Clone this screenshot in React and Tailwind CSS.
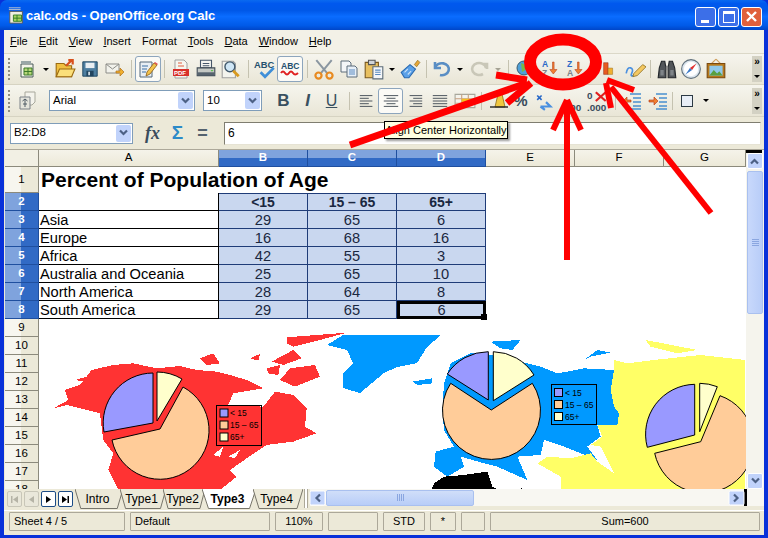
import React from 'react';

const ui = { fontFamily: '"Liberation Sans", Arial, sans-serif' };
const sheetFont = { fontFamily: '"Liberation Sans", Arial, sans-serif' };

const menus = [
  ['F', 'ile'], ['E', 'dit'], ['V', 'iew'], ['I', 'nsert'], ['', 'Format'],
  ['T', 'ools'], ['D', 'ata'], ['W', 'indow'], ['H', 'elp'],
];

const rows = [
  ['Asia', 29, 65, 6],
  ['Europe', 16, 68, 16],
  ['Africa', 42, 55, 3],
  ['Australia and Oceania', 25, 65, 10],
  ['North America', 28, 64, 8],
  ['South America', 29, 65, 6],
];

const Ic = ({ children, size = 20 }) => (
  <svg width={size} height={size} viewBox="0 0 20 20">{children}</svg>
);

const Btn = ({ w = 'w-[25px]', active, children }) => (
  <div className={`${w} h-[26px] shrink-0 flex items-center justify-center ${active ? 'bg-[#fbfaf6] border border-[#8da5bd] rounded-[3px]' : ''}`}>
    {children}
  </div>
);

const Sep = ({ w = 'w-[8px]' }) => (
  <div className={`${w} shrink-0 flex justify-center`}>
    <div className="w-px h-[18px] bg-[#c5c2b0]" />
  </div>
);

const Drop = ({ w = 'w-[12px]', gray }) => (
  <div className={`${w} shrink-0 flex justify-center`}>
    <div className={`w-0 h-0 border-x-[3px] border-x-transparent border-t-[3px] ${gray ? 'border-t-[#a5a294]' : 'border-t-black'}`} />
  </div>
);

const Grip = () => (
  <div className="w-[11px] shrink-0 pl-[4px] flex flex-col gap-[2px]">
    {[0, 1, 2, 3, 4, 5].map((i) => <div key={i} className="w-[2px] h-[2px] bg-[#8f8d80]" />)}
  </div>
);

const Chevron = ({ cls = 'stroke-[#4d6185]' }) => (
  <svg width="11" height="8" viewBox="0 0 11 8" className={cls}><path d="M2 1.5 L5.5 5 L9 1.5" fill="none" strokeWidth="2.2" /></svg>
);

const Combo = ({ w, value }) => (
  <div className={`${w} h-[21px] shrink-0 bg-white border border-[#7f9db9] flex items-center justify-between pl-[3px] pr-[1px]`}>
    <span className="text-[11.5px] text-black">{value}</span>
    <div className="w-[15px] h-[17px] bg-[#c1d3fb] rounded-[2px] flex items-center justify-center"><Chevron /></div>
  </div>
);

const Overflow = () => (
  <div className="ml-auto mr-[2px] w-[10px] h-[26px] shrink-0 bg-[#d3d1c3] flex flex-col items-center justify-between py-[1px]">
    <span className="text-[10px] leading-[9px] font-bold text-black">»</span>
    <div className="w-0 h-0 border-x-[3px] border-x-transparent border-t-[3px] border-t-black mb-[3px]" />
  </div>
);

const Sheetdoc = () => (
  <Ic>
    <path d="M3 5h12v13H3z" fill="#f4f4ea" stroke="#4a5a5a" />
    <path d="M6 9h8v7H6z" fill="#b8d878" stroke="#3c7a2a" />
    <path d="M10 9v7M6 12.5h8" stroke="#3c7a2a" />
    <path d="M3 2h10v3H3z" fill="#9aa7a7" />
  </Ic>
);
const OpenIc = () => (
  <Ic size={22}>
    <path d="M2 5h7l2 2h5v10H2z" fill="#f0c040" stroke="#9a6a10" />
    <path d="M2 17l3-7h14l-3 7z" fill="#fbdf7a" stroke="#9a6a10" />
    <path d="M11 7l5-5M13 2h4v4" stroke="#d8501c" strokeWidth="2" fill="none" />
  </Ic>
);
const SaveIc = () => (
  <Ic size={18}>
    <path d="M2 2h16v16H2z" fill="#4d7ea0" stroke="#16405c" />
    <path d="M5 3h10v6H5z" fill="#e8eef2" />
    <path d="M6 12h8v6H6z" fill="#21455f" />
    <path d="M8 13h2v4H8z" fill="#cfdbe4" />
  </Ic>
);
const MailIc = () => (
  <Ic>
    <path d="M1 5h13v9H1z" fill="#f2f2ec" stroke="#8d8d88" />
    <path d="M1 5l6.5 5L14 5" fill="none" stroke="#8d8d88" />
    <path d="M11 12h4v-3l4 4-4 4v-3h-4z" fill="#f0b030" stroke="#b0701a" strokeWidth=".7" />
  </Ic>
);
const EditIc = () => (
  <Ic>
    <path d="M2 3h12v15H2z" fill="#e8eef4" stroke="#55687a" />
    <path d="M4 7h6M4 10h5M4 13h4" stroke="#3a6ea5" />
    <path d="M9 13l7-9 3 2-7 9-4 2z" fill="#f3c24a" stroke="#8a5a14" strokeWidth=".8" />
    <path d="M16 4l3 2 1-1-3-2z" fill="#e25050" />
  </Ic>
);
const PdfIc = () => (
  <Ic>
    <path d="M4 1h9l3 3v15H4z" fill="#f6f6f0" stroke="#a0a0a0" />
    <path d="M7 4h4M7 7h6" stroke="#e06040" />
    <path d="M2 10h16v7H2z" fill="#d8302a" />
    <text x="3" y="16" fontSize="6" fontWeight="700" fill="#fff" fontFamily="Liberation Sans">PDF</text>
  </Ic>
);
const PrintIc = () => (
  <Ic size={22}>
    <path d="M5 2h10v7H5z" fill="#f6f6f2" stroke="#46566a" />
    <path d="M7 5h6M7 7h6" stroke="#46566a" />
    <path d="M2 9h16v7H2z" fill="#c4c8c4" stroke="#3f4a55" />
    <path d="M2 13h16v3H2z" fill="#57636e" />
    <path d="M14.5 11h2v1h-2z" fill="#58c048" />
  </Ic>
);
const PreviewIc = () => (
  <Ic size={22}>
    <path d="M2 3h10l2 2v13H2z" fill="#f4f4ee" stroke="#a0a0a0" />
    <circle cx="9" cy="8" r="4.5" fill="#cfe6f6" stroke="#40586c" strokeWidth="1.3" />
    <path d="M12 11.5l5 5" stroke="#d89a20" strokeWidth="2.6" />
  </Ic>
);
const SpellIc = () => (
  <Ic size={22}>
    <text x="0" y="9" fontSize="8.5" fontWeight="700" fill="#24506e" fontFamily="Liberation Sans">ABC</text>
    <path d="M6 13l4 4 8-8" fill="none" stroke="#3f8fd8" strokeWidth="2.5" />
  </Ic>
);
const AutoSpellIc = () => (
  <Ic size={20}>
    <text x="1" y="10" fontSize="8.5" fontWeight="700" fill="#24506e" fontFamily="Liberation Sans">ABC</text>
    <path d="M1 14q2-3 4 0t4 0 4 0 5 0" fill="none" stroke="#e02020" strokeWidth="2" />
  </Ic>
);
const CutIc = () => (
  <Ic size={22}>
    <path d="M3 2l10 12M17 2L7 14" stroke="#8a96a0" strokeWidth="1.8" />
    <circle cx="5" cy="16" r="2.8" fill="none" stroke="#e88a20" strokeWidth="2" />
    <circle cx="15" cy="16" r="2.8" fill="none" stroke="#e88a20" strokeWidth="2" />
  </Ic>
);
const CopyIc = () => (
  <Ic>
    <path d="M2 2h8l2 2v9H2z" fill="#f4f6f8" stroke="#5c6c7a" />
    <path d="M8 7h8l2 2v9H8z" fill="#e8f0f8" stroke="#5c6c7a" />
    <path d="M10 11h6M10 13h6M10 15h6" stroke="#5a8ac0" />
  </Ic>
);
const PasteIc = () => (
  <Ic size={22}>
    <path d="M2 4h12v14H2z" fill="#e8c060" stroke="#7a5a20" />
    <path d="M5 2h6v4H5z" fill="#d0d4d8" stroke="#555" />
    <path d="M9 8h9v11H9z" fill="#f4f6f8" stroke="#5c6c7a" />
    <path d="M11 11h5M11 13h5M11 15h5" stroke="#5a8ac0" />
  </Ic>
);
const BrushIc = () => (
  <Ic size={22}>
    <path d="M14 6l3-4 2 2-3 4z" fill="#e8a838" stroke="#8a6a1a" strokeWidth=".6" />
    <path d="M2 13l8-7 5 4-6 8H5z" fill="#5aa0e8" stroke="#2a6ab0" />
    <path d="M5 13l3-3M8 15l3-3" stroke="#c8e0f8" />
  </Ic>
);
const UndoIc = ({ gray }) => (
  <Ic size={20}>
    <path d={gray ? 'M7 5 h-5 v5 M3 9 a7 6 0 1 1 3 6' : 'M3 3v6h6 M3 9 a7 6 0 1 1 5 7'} fill="none" stroke={gray ? '#c9c7b8' : '#5a8ec4'} strokeWidth="2.6" transform={gray ? 'matrix(-1 0 0 1 20 0)' : undefined} />
  </Ic>
);
const NavIc = () => (
  <Ic size={20}>
    <circle cx="9" cy="9" r="7" fill="#4ea0d8" stroke="#3a5a70" />
    <path d="M6 4l5 2 1 4-5 3z" fill="#78b848" />
  </Ic>
);
const SortIc = ({ a, b }) => (
  <svg width="20" height="20" viewBox="0 0 20 20">
    <text x="2" y="8" fontSize="8.5" fontWeight="700" fill="#2a6ac8" fontFamily="Liberation Sans">{a}</text>
    <text x="2" y="17" fontSize="8.5" fontWeight="700" fill="#7c8288" fontFamily="Liberation Sans">{b}</text>
    <path d="M12.5 3h1.6v7.500H17L13.3 15l-3.500-4.500h2.700z" fill="#f08030" stroke="#b03010" strokeWidth=".5" />
  </svg>
);
const ChartIc = () => (
  <Ic size={18}>
    <path d="M4 3h5v13H4z" fill="#e85a20" stroke="#802010" strokeWidth=".5" />
    <path d="M9 9h5v7H9z" fill="#f0b030" stroke="#906010" strokeWidth=".5" />
  </Ic>
);
const DrawIc = () => (
  <Ic size={22}>
    <path d="M2 14q1-6 4-5t1 5 4 1" fill="none" stroke="#4a90e0" strokeWidth="1.5" />
    <path d="M9 14l8-8 3 2-8 8-4 1z" fill="#f4c860" stroke="#8a6a1a" strokeWidth=".7" />
  </Ic>
);
const BinoIc = () => (
  <Ic size={22}>
    <path d="M3 9l2-6h3l1 6v9H2zM17 9l-2-6h-3l-1 6v9h7z" fill="#52565a" stroke="#22262a" />
    <path d="M9 7h2v4H9z" fill="#888" />
    <path d="M4 11h3v5H4zM13 11h3v5h-3z" fill="#7f8488" />
  </Ic>
);
const CompassIc = () => (
  <Ic size={22}>
    <circle cx="10" cy="10" r="8.5" fill="#dce6ee" stroke="#60707c" />
    <circle cx="10" cy="10" r="6.5" fill="#fff" />
    <path d="M15 5l-4 6-2-2z" fill="#e03030" />
    <path d="M5 15l4-6 2 2z" fill="#3a7ac8" />
  </Ic>
);
const GalleryIc = () => (
  <Ic size={22}>
    <path d="M10 1L6 5M10 1l4 4" stroke="#d0a060" />
    <path d="M2 5h16v13H2z" fill="#b87818" stroke="#7a4a10" />
    <path d="M4 7h12v9H4z" fill="#90c8e8" />
    <path d="M4 16l4-5 3 3 2-2 3 4z" fill="#58a040" />
  </Ic>
);
const StylesIc = () => (
  <Ic size={20}>
    <path d="M7 1h10v10l-3 3H7z" fill="#f4f3ec" stroke="#a8a89c" />
    <path d="M2 6h10v12H2z" fill="#e4e4dc" stroke="#7c8288" />
    <path d="M7 8v8M4.5 10L7 8l2.5 2M5 13h4" fill="none" stroke="#4e5a64" />
  </Ic>
);
const AlignIc = ({ kind }) => {
  const d = {
    left: 'M2 4h14M2 7h10M2 10h14M2 13h10M2 16h14',
    center: 'M2 4h16M5 7h10M2 10h16M5 13h10M2 16h16',
    right: 'M4 4h14M8 7h10M4 10h14M8 13h10M4 16h14',
    block: 'M2 4h16M2 7h16M2 10h16M2 13h16M2 16h16',
  }[kind];
  return <Ic size={18}><path d={d} stroke="#3c4650" fill="none" /></Ic>;
};
const MergeIc = () => (
  <Ic size={22}>
    <path d="M1 4h18v12H1z" fill="#f4f3ec" stroke="#a8a89c" />
    <path d="M1 8h18M1 12h18M7 4v12M13 4v12" stroke="#c8a080" />
    <path d="M7 8h8v4H7z" fill="#f6c020" />
  </Ic>
);
const CurrencyIc = () => (
  <Ic size={20}>
    <path d="M9 3h4l3 13H6z" fill="#f0c840" stroke="#8a6a1a" strokeWidth=".8" />
    <path d="M1 16h18" stroke="#222" strokeWidth="1.4" />
  </Ic>
);
const PercentIc = () => (
  <Ic size={18}>
    <text x="1" y="16" fontSize="17" fontWeight="700" fill="#3a4c5c" fontFamily="Liberation Sans">%</text>
  </Ic>
);
const NumPlusIc = () => (
  <Ic size={22}>
    <path d="M2 5l4 4M6 5L2 9" stroke="#2a6ac8" strokeWidth="1.5" />
    <path d="M5 15h9l-4-4M5 15l4 3" fill="none" stroke="#4a90e0" strokeWidth="2" />
  </Ic>
);
const NumDelIc = () => (
  <Ic size={22}>
    <text x="0" y="8" fontSize="9" fontWeight="700" fill="#3a4c5c" fontFamily="Liberation Sans">0</text>
    <text x="0" y="19" fontSize="9" fontWeight="700" fill="#3a4c5c" fontFamily="Liberation Sans">.000</text>
    <path d="M8 2l9 8M17 2l-9 8" stroke="#e02020" strokeWidth="2" />
  </Ic>
);
const NumAddIc = () => (
  <Ic size={22}>
    <text x="0" y="19" fontSize="9" fontWeight="700" fill="#3a4c5c" fontFamily="Liberation Sans">.000</text>
  </Ic>
);
const IndentIc = ({ flip }) => (
  <Ic size={20}>
    <path d="M8 3h11M11 7h8M11 11h8M11 15h8M8 18h11" stroke="#4a90d0" strokeWidth="1.4" />
    <path d={flip ? 'M1 9h5V6l4 4-4 4v-3H1z' : 'M9 9H5V6l-4 4 4 4v-3h4z'} fill="#f08030" stroke="#b03010" strokeWidth=".6" />
  </Ic>
);

const Pie = ({ peach, blue, cream }) => (
  <g stroke="#000" strokeWidth="1">
    <path d={peach} fill="#ffcc99" />
    <path d={blue} fill="#9999ff" />
    <path d={cream} fill="#ffffcc" />
  </g>
);

const Legend = ({ x, y, w, h, sx, st, ys, gap = 12 }) => (
  <g fontFamily="Liberation Sans" fontSize="8.500">
    <rect x={x} y={y} width={w} height={h} fill="none" stroke="#000" />
    {[['#9999ff', '< 15'], ['#ffcc99', '15 – 65'], ['#ffffcc', '65+']].map(([c, t], i) => (
      <g key={t}>
        <rect x={sx} y={ys + i * gap} width="8" height="8" fill={c} stroke="#000" />
        <text x={st} y={ys + i * gap + 7} fill="#000">{t}</text>
      </g>
    ))}
  </g>
);

const SheetDrawing = () => (
  <svg className="absolute left-[34px] top-[169px]" width="707" height="171" viewBox="39 319 707 171">
    {/* red continent, coords taken off a 3x crop */}
    <g transform="translate(0 330) scale(0.3333)" fill="#ff3333" shapeRendering="crispEdges">
      <path d="M160 235L205 210L195 180L240 165L275 120L340 105L400 100L470 115L540 108L590 120L650 125L690 135L740 150L790 175L700 190L685 225L790 230L825 185L880 195L920 235L915 290L950 310L880 335L800 345L740 385L690 420L710 440L650 488L360 488L325 420L340 370L310 330L300 250L200 225Z" />
      <path d="M860 22L1040 8L960 30L880 50L860 40Z" />
      <path d="M600 85L640 70L660 100L620 105Z" />
      <path d="M750 85L780 72L775 92Z" />
      <path d="M815 95L880 60L905 85L850 105Z" />
      <path d="M800 115L840 105L835 135L805 130Z" />
      <path d="M870 115L945 105L960 140L885 170L840 150Z" />
      <path d="M225 150L260 140L255 155Z" />
    </g>
    <g transform="translate(0 330) scale(0.3333)" fill="#fff" shapeRendering="crispEdges">
      <path d="M640 375L670 350L660 380ZM685 380L720 360L705 385Z" />
    </g>
    {/* greenland + europe */}
    <path d="M327 345L343 335L441 335L427 347L417 363L397 367L384 373L360 393L343 388L343 373L353 363L347 350Z" fill="#0099ff" shapeRendering="crispEdges" />
    <g transform="translate(384 330) scale(0.3333)" fill="#0099ff" shapeRendering="crispEdges">
      <path d="M85 155L145 145L145 160L100 165Z" />
      <path d="M320 35L410 30L385 60L350 55Z" />
      <path d="M600 90L640 60L680 68L620 80Z" />
      <path d="M200 100L260 70L300 70L430 100L470 110L520 130L550 125L600 115L690 120L680 180L690 230L705 250L700 285L640 285L650 320L610 350L640 390L590 370L540 350L480 330L470 375L400 380L430 450L340 410L300 400L230 380L240 410L190 440L150 410L155 365L210 350L180 300L175 240L180 160Z" />
    </g>
    <g transform="translate(384 330) scale(0.3333)" fill="#ffff66" shapeRendering="crispEdges">
      <path d="M690 90L730 100L810 90L950 75L1083 90L1083 490L530 490L530 440L460 400L490 380L560 385L620 370L640 395L690 430L650 350L620 345L655 320L640 285L700 285L705 250L690 230L680 180L690 120Z" />
      <path d="M785 30L940 60L880 70L800 50Z" />
    </g>
    <g transform="translate(384 330) scale(0.3333)" fill="#000" shapeRendering="crispEdges">
      <path d="M140 488L150 460L180 440L240 435L310 425L325 470L365 488Z" />
      <path d="M405 488L410 475L450 480L470 488Z" />
    </g>
    <Pie
      peach="M160 429L183 387A49 49 0 1 1 112 440Z"
      blue="M153 423L104 432A50 50 0 0 1 153 373Z"
      cream="M157 421L157 372A49 49 0 0 1 182 379Z"
    />
    <Legend x={216.5} y={405.5} w={45} h={40} sx={220} st={230} ys={409} />
    <Pie
      peach="M491.3 410L532.3 383.3A49 49 0 1 1 450.7 383.3Z"
      blue="M488.3 400L447.3 374A49 49 0 0 1 488.3 351.7Z"
      cream="M493.3 400.7L493.3 351.7A49 49 0 0 1 534 375Z"
    />
    <Legend x={551.5} y={384.5} w={45} h={40} sx={554.5} st={565} ys={388.5} />
    <Pie
      peach="M700.7 441.7L720 395.7A50 50 0 1 1 654.7 453.3Z"
      blue="M694.7 435L647.3 447.3A50 50 0 0 1 694.7 384.3Z"
      cream="M699.7 431.7L699.7 383.3A50 50 0 0 1 717.3 386.7Z"
    />
  </svg>
);

const Tab = ({ w, name, active }) => (
  <div className={`relative ${w} h-[20px] shrink-0 -mr-[3px] flex items-center justify-center pr-[3px]`}>
    <svg className="absolute inset-0 w-full h-full" viewBox="0 0 50 20" preserveAspectRatio="none">
      <path d="M0 0L6 19.5L44 19.5L50 0" fill={active ? '#fff' : '#ece9d8'} stroke="#77756a" vectorEffect="non-scaling-stroke" />
    </svg>
    <span className={`relative text-[12px] ${active ? 'font-bold' : ''} text-black`}>{name}</span>
  </div>
);

const NavBtn = ({ d, on }) => (
  <div className={`w-[15px] h-[16px] shrink-0 rounded-[2px] border flex items-center justify-center ${on ? 'border-[#1c4c86] bg-white' : 'border-[#c8c6b8] bg-[#e9e7da]'}`}>
    <svg width="9" height="9" viewBox="0 0 9 9"><path d={d} fill={on ? '#000' : '#b5b3a6'} /></svg>
  </div>
);

const Status = ({ w, children }) => (
  <div className={`${w} h-[19px] shrink-0 border border-[#aca899] rounded-[1px] text-[11px] text-black flex items-center`}>
    {children}
  </div>
);

export default function App() {
  return (
    <div className="relative w-[768px] h-[538px] overflow-hidden flex flex-col bg-[#0831d9]" style={ui}>
      {/* title bar */}
      <div className="h-[30px] shrink-0 flex items-center pl-[8px] pr-[6px] bg-[linear-gradient(to_bottom,#0a6af0_0%,#0058ee_12%,#0058e8_35%,#0a6cff_55%,#005ae8_85%,#0046c8_100%)] rounded-t-[7px]">
        <Ic size={18}>
          <path d="M2 6h14v13H2z" fill="#f0eee0" stroke="#555" />
          <path d="M6 10h9v7H6z" fill="#a6d060" stroke="#2e7a20" />
          <path d="M10 10v7M6 13.5h9" stroke="#2e7a20" />
          <path d="M1 2h13M1 4h13" stroke="#c8ccd0" />
        </Ic>
        <span className="text-[13px] font-bold text-white leading-none">calc.ods - OpenOffice.org Calc</span>
        <div className="ml-auto mt-[3px] flex gap-[2px]">
          <div className="w-[21px] h-[20px] rounded-[3px] border border-white bg-[#3c6fe8] flex items-end pl-[5px] pb-[3px]">
            <div className="w-[8px] h-[3px] bg-white" />
          </div>
          <div className="w-[21px] h-[20px] rounded-[3px] border border-white bg-[#3c6fe8] flex items-center justify-center">
            <div className="w-[12px] h-[12px] border border-white border-t-[3px]" />
          </div>
          <div className="w-[21px] h-[20px] rounded-[3px] border border-white bg-[#e0603c] flex items-center justify-center">
            <svg width="13" height="13" viewBox="0 0 13 13"><path d="M2 2l9 9M11 2l-9 9" stroke="#fff" strokeWidth="2.4" /></svg>
          </div>
        </div>
      </div>

      <div className="mx-[4px] flex-1 min-h-0 flex flex-col bg-[#ece9d8] mb-[3px]">
        {/* menu */}
        <div className="h-[24px] shrink-0 flex items-center gap-[11px] pl-[6px] text-[11px] text-black bg-[#f3f1e7] border-b border-[#dbd8c8]">
          {menus.map(([u, rest]) => (
            <span key={rest}><span className="underline">{u}</span>{rest}</span>
          ))}
        </div>

        {/* standard toolbar */}
        <div className="h-[31px] shrink-0 flex items-center bg-[linear-gradient(to_bottom,#f6f5ee,#e9e6d6)] border-b border-[#d6d3c2]">
          <Grip />
          <Btn><Sheetdoc /></Btn>
          <Drop />
          <Btn><OpenIc /></Btn>
          <Btn><SaveIc /></Btn>
          <Btn><MailIc /></Btn>
          <Sep />
          <Btn w="w-[26px]" active><EditIc /></Btn>
          <Sep w="w-[7px]" />
          <Btn><PdfIc /></Btn>
          <Btn><PrintIc /></Btn>
          <Btn w="w-[26px]"><PreviewIc /></Btn>
          <Sep />
          <Btn><SpellIc /></Btn>
          <Btn w="w-[26px]" active><AutoSpellIc /></Btn>
          <Sep />
          <Btn><CutIc /></Btn>
          <Btn><CopyIc /></Btn>
          <Btn><PasteIc /></Btn>
          <Drop w="w-[11px]" />
          <Btn><BrushIc /></Btn>
          <Sep />
          <Btn w="w-[24px]"><UndoIc /></Btn>
          <Drop />
          <Btn><UndoIc gray /></Btn>
          <Drop w="w-[13px]" gray />
          <Sep />
          <Btn><NavIc /></Btn>
          <Btn><SortIc a="A" b="Z" /></Btn>
          <Btn><SortIc a="Z" b="A" /></Btn>
          <Sep />
          <Btn w="w-[28px]"><ChartIc /></Btn>
          <Btn w="w-[23px]"><DrawIc /></Btn>
          <Sep />
          <Btn><BinoIc /></Btn>
          <Btn w="w-[24px]"><CompassIc /></Btn>
          <Btn><GalleryIc /></Btn>
          <Overflow />
        </div>

        {/* formatting toolbar */}
        <div className="h-[32px] shrink-0 flex items-center bg-[linear-gradient(to_bottom,#f6f5ee,#e9e6d6)] border-b border-[#d6d3c2]">
          <Grip />
          <Btn><StylesIc /></Btn>
          <div className="w-[9px] shrink-0" />
          <Combo w="w-[146px]" value="Arial" />
          <div className="w-[8px] shrink-0" />
          <Combo w="w-[59px]" value="10" />
          <div className="w-[9px] shrink-0" />
          <Btn><span className="text-[17px] font-bold text-[#39505f]">B</span></Btn>
          <Btn w="w-[23px]"><span className="text-[17px] italic font-bold text-[#39505f]">I</span></Btn>
          <Btn><span className="text-[16px] underline text-[#39505f]">U</span></Btn>
          <Sep w="w-[11px]" />
          <Btn w="w-[23px]"><AlignIc kind="left" /></Btn>
          <Btn active><AlignIc kind="center" /></Btn>
          <Btn w="w-[24px]"><AlignIc kind="right" /></Btn>
          <Btn><AlignIc kind="block" /></Btn>
          <Btn><MergeIc /></Btn>
          <Sep w="w-[8px]" />
          <Btn w="w-[27px]"><CurrencyIc /></Btn>
          <Btn w="w-[20px]"><PercentIc /></Btn>
          <Btn w="w-[28px]"><NumPlusIc /></Btn>
          <Btn><NumAddIc /></Btn>
          <Btn w="w-[26px]"><NumDelIc /></Btn>
          <Sep />
          <Btn w="w-[26px]"><IndentIc /></Btn>
          <Btn><IndentIc flip /></Btn>
          <Sep w="w-[4px]" />
          <Btn w="w-[26px]"><div className="w-[12px] h-[12px] bg-[#e8eef6] border border-[#2c3a44]" /></Btn>
          <Drop />
          <Overflow />
        </div>

        {/* formula bar */}
        <div className="h-[32px] shrink-0 flex items-center pl-[6px] pr-[3px]">
          <Combo w="w-[123px]" value="B2:D8" />
          <div className="w-[7px] shrink-0" />
          <Btn><span className="text-[18px] italic font-bold text-[#3a4c5c]" style={{ fontFamily: '"Liberation Serif", serif' }}>fx</span></Btn>
          <Btn><span className="text-[19px] font-bold text-[#2c8ac8]">Σ</span></Btn>
          <Btn><span className="text-[18px] font-bold text-[#54626e]">=</span></Btn>
          <div className="w-[9px] shrink-0" />
          <div className="flex-1 h-[23px] bg-white border border-[#7f7d70] border-b-[#e6e3d4] border-r-[#e6e3d4] pl-[3px] text-[12px] leading-[20px] text-black">6</div>
        </div>

        {/* spreadsheet */}
        <div className="h-[340px] shrink-0 flex overflow-hidden bg-white border-t border-[#aca899] ml-px">
          <div className="relative w-[741px] h-full overflow-hidden shrink-0" style={sheetFont}>
            <div className="grid grid-cols-[34px_180px_89px_89px_89px_89px_89px_82px] grid-rows-[17px_26px_repeat(17,18px)]">
              {/* column headers */}
              <div className="bg-[#f2f0e4] border-r border-b border-[#8c8a7c]" />
              {['A', 'B', 'C', 'D', 'E', 'F', 'G'].map((c) => {
                const sel = c === 'B' || c === 'C' || c === 'D';
                return (
                  <div key={c} className={`flex items-center justify-center text-[11.5px] border-b border-r ${sel ? 'bg-[linear-gradient(to_bottom,#7fa3dd_0,#7fa3dd_50%,#316ac5_50%)] font-bold text-white border-[#1f4f9f]' : 'bg-[linear-gradient(to_bottom,#f5f3ea,#ece9d8)] text-black border-[#8c8a7c]'}`}>
                    {c}
                  </div>
                );
              })}

              {/* row 1 */}
              <div className="bg-[linear-gradient(to_right,#f7f6ef_50%,#ece9d8_50%)] border-r border-b border-[#8c8a7c] flex items-center justify-center text-[11.5px] text-black">1</div>
              <div className="col-span-7 pl-[2px] flex items-center text-[21px] font-bold text-black whitespace-nowrap">Percent of Population of Age</div>

              {/* row 2 */}
              <div className="bg-[linear-gradient(to_right,#7fa3dd_50%,#316ac5_50%)] border-r border-b border-[#1f4f9f] flex items-center justify-center text-[11.5px] font-bold text-white">2</div>
              <div className="border-r border-b border-black" />
              {['<15', '15 – 65', '65+'].map((h) => (
                <div key={h} className="bg-[#c9d7ef] border-r border-b border-t border-[#1f3c78] flex items-center justify-center text-[14px] font-bold text-[#1a2740]">{h}</div>
              ))}
              <div className="col-span-3" />

              {/* data rows */}
              {rows.map((r, i) => (
                <React.Fragment key={r[0]}>
                  <div className="bg-[linear-gradient(to_right,#7fa3dd_50%,#316ac5_50%)] border-r border-b border-[#1f4f9f] flex items-center justify-center text-[11.5px] font-bold text-white">{i + 3}</div>
                  <div className="border-r border-b border-black pl-px flex items-center text-[14.67px] text-black whitespace-nowrap">{r[0]}</div>
                  {r.slice(1).map((v, j) => (
                    <div key={j} className={`bg-[#c9d7ef] flex items-center justify-center text-[14.67px] text-[#1a2740] ${i === 5 && j === 2 ? 'relative border-[3px] border-black' : 'border-r border-b border-[#1f3c78]'}`}>
                      {v}
                      {i === 5 && j === 2 && <div className="absolute -right-[4px] -bottom-[4px] w-[6px] h-[6px] bg-black" />}
                    </div>
                  ))}
                  <div className="col-span-3" />
                </React.Fragment>
              ))}

              {/* empty rows */}
              {[9, 10, 11, 12, 13, 14, 15, 16, 17, 18].map((n) => (
                <React.Fragment key={n}>
                  <div className="bg-[linear-gradient(to_right,#f7f6ef_50%,#ece9d8_50%)] border-r border-b border-[#8c8a7c] flex items-center justify-center text-[11.5px] text-black">{n}</div>
                  <div className="col-span-7" />
                </React.Fragment>
              ))}
            </div>
            <SheetDrawing />
          </div>

          {/* vertical scrollbar */}
          <div className="flex-1 flex flex-col bg-[#f5f4ed]">
            <div className="h-[3px] mr-[2px] bg-black shrink-0" />
            <div className="mx-[1px] h-[16px] shrink-0 rounded-[2px] border border-white bg-[#c1d3fb] flex items-center justify-center rotate-180"><Chevron /></div>
            <div className="mt-[2px] mx-[1px] h-[143px] shrink-0 rounded-[2px] border border-[#a9c0ef] bg-[linear-gradient(to_right,#c8d8fb,#b8cdf8)] flex flex-col items-center justify-center gap-[1px]">
              {[0, 1, 2, 3].map((i) => <div key={i} className="w-[7px] h-px bg-[#8aa6e0]" />)}
            </div>
            <div className="mt-auto mx-[1px] h-[16px] shrink-0 rounded-[2px] border border-white bg-[#c1d3fb] flex items-center justify-center"><Chevron /></div>
          </div>
        </div>

        {/* sheet tabs + horizontal scrollbar */}
        <div className="h-[21px] shrink-0 flex items-start bg-[#ece9d8] text-black">
          <div className="w-[71px] shrink-0 pl-[3px] pt-[2px] flex gap-[2px]">
            <NavBtn d="M1 1h1.500v7H1zM8 1v7L3 4.500z" />
            <NavBtn d="M7 1v7L2 4.500z" />
            <NavBtn on d="M2 1v7l5-3.500z" />
            <NavBtn on d="M1 1v7l5-3.500zM6.500 1H8v7H6.500z" />
          </div>
          <Tab w="w-[48px]" name="Intro" />
          <Tab w="w-[46px]" name="Type1" />
          <Tab w="w-[42px]" name="Type2" />
          <Tab w="w-[54px]" name="Type3" active />
          <Tab w="w-[50px]" name="Type4" />
          <div className="ml-[4px] w-[4px] h-[19px] bg-white border-x border-[#aca899] shrink-0" />
          <div className="ml-[2px] flex-1 h-[17px] flex items-center bg-[#f8f7f2] relative">
            <div className="w-[15px] h-[16px] shrink-0 rounded-[2px] bg-[#c1d3fb] border border-white flex items-center justify-center rotate-90"><Chevron /></div>
            <div className="ml-[1px] w-[148px] h-[16px] shrink-0 rounded-[2px] bg-[linear-gradient(to_bottom,#d0def9,#b8cdf8)] border border-[#a9c0ef] flex items-center justify-center gap-[1px]">
              {[0, 1, 2, 3].map((i) => <div key={i} className="w-px h-[7px] bg-[#8aa6e0]" />)}
            </div>
            <div className="ml-auto w-[15px] h-[16px] shrink-0 rounded-[2px] bg-[#c1d3fb] border border-white flex items-center justify-center -rotate-90"><Chevron /></div>
            <div className="w-[3px] h-[17px] bg-black shrink-0" />
            <div className="w-[17px] shrink-0" />
          </div>
        </div>

        {/* status bar */}
        <div className="h-[22px] shrink-0 flex items-center gap-[5px] pl-[5px] pr-[4px] border-t border-white">
          <Status w="w-[116px]"><span className="pl-[4px]">Sheet 4 / 5</span></Status>
          <Status w="w-[140px]"><span className="pl-[4px]">Default</span></Status>
          <Status w="w-[48px]"><span className="w-full text-center">110%</span></Status>
          <Status w="w-[50px]" />
          <Status w="w-[42px]"><span className="w-full text-center">STD</span></Status>
          <Status w="w-[26px]"><span className="w-full text-center">*</span></Status>
          <Status w="w-[24px]" />
          <Status w="flex-1"><span className="w-full text-center">Sum=600</span></Status>
        </div>
      </div>

      {/* tooltip */}
      <div className="absolute left-[384px] top-[121px] h-[18px] w-[124px] bg-[#ffffe1] border border-black shadow-[2px_2px_2px_rgba(0,0,0,0.4)] text-[11px] leading-[16px] text-black text-center whitespace-nowrap">
        Align Center Horizontally
      </div>

      {/* red hand-drawn annotations */}
      <svg className="absolute inset-0 pointer-events-none" width="768" height="538" viewBox="0 0 768 538" fill="none" stroke="#ff0000">
        <ellipse cx="563" cy="62" rx="33" ry="22.5" strokeWidth="12" />
        <g strokeWidth="7">
          <path d="M350 145L527 83" />
          <path d="M496 75L527 80" />
          <path d="M507 103L531 83" />
        </g>
        <g strokeWidth="6">
          <path d="M567 260L567 100" />
          <path d="M553 130L567 100" />
          <path d="M581 130L567 100" />
          <path d="M711 213L611 87" />
          <path d="M606 83L611 108" />
          <path d="M634 90L607 80" />
        </g>
      </svg>
    </div>
  );
}
